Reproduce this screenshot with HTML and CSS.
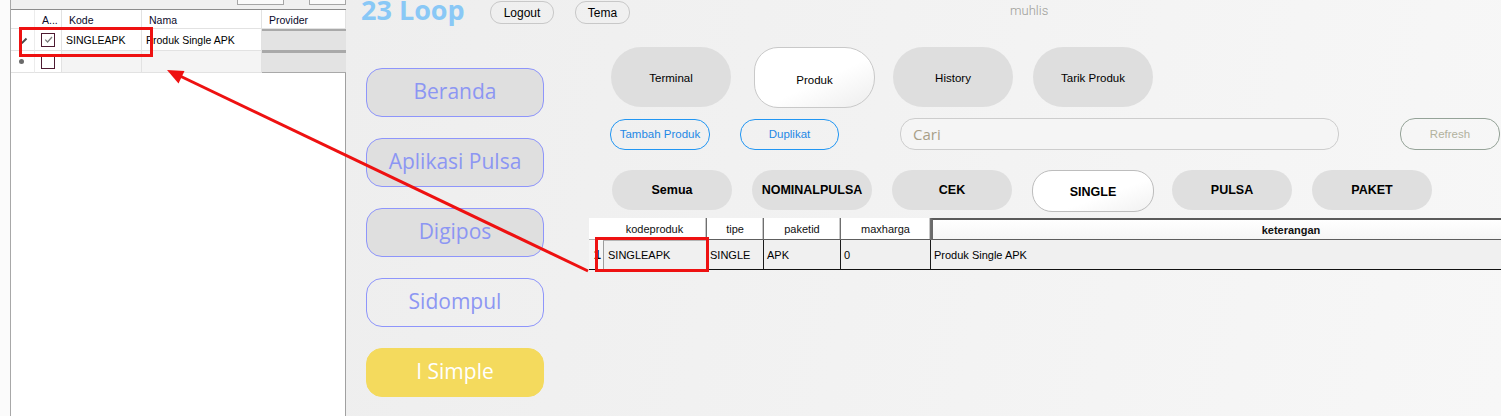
FILE: index.html
```html
<!DOCTYPE html>
<html>
<head>
<meta charset="utf-8">
<title>23 Loop</title>
<link rel="stylesheet" href="styles.css">
</head>
<body>
<div class="left">
  <div class="lmargin"></div>
  <div class="lmain">
    <div class="lstrip">
      <div class="tbtn tb1"></div>
      <div class="tbtn tb2"></div>
    </div>
    <div class="lgrid">
      <div class="c hd rh"></div>
      <div class="c hd ctr">A...</div>
      <div class="c hd">Kode</div>
      <div class="c hd">Nama</div>
      <div class="c hd">Provider</div>

      <div class="c rh"><svg class="pencil" width="8" height="8" viewBox="0 0 8 8"><path d="M0.5 7.5 L1.2 5.4 L5.8 0.8 L7.2 2.2 L2.6 6.8 Z" fill="#4a4a4a"/></svg></div>
      <div class="c ck"><span class="box"><svg width="11" height="11" viewBox="0 0 11 11"><polyline points="2.2,5.6 4.6,8 9,3" fill="none" stroke="#7a7a7a" stroke-width="1.2"/></svg></span></div>
      <div class="c txt">SINGLEAPK</div>
      <div class="c txt">Produk Single APK</div>
      <div class="c prov"></div>

      <div class="c rh"><span class="dot"></span></div>
      <div class="c ck"><span class="box"></span></div>
      <div class="c newrow"></div>
      <div class="c newrow"></div>
      <div class="c prov"></div>
    </div>
  </div>
</div>

<div class="right">
  <div class="head">
    <div class="brand">23 Loop</div>
    <div class="hbtn logout">Logout</div>
    <div class="hbtn tema">Tema</div>
    <div class="user">muhlis</div>
  </div>
  <div class="body">
    <nav class="side">
      <div class="nav">Beranda</div>
      <div class="nav">Aplikasi Pulsa</div>
      <div class="nav">Digipos</div>
      <div class="nav nav-out">Sidompul</div>
      <div class="nav nav-yellow">I Simple</div>
    </nav>
    <main class="main">
      <div class="tabs">
        <div class="tab">Terminal</div>
        <div class="tab tab-active">Produk</div>
        <div class="tab">History</div>
        <div class="tab">Tarik Produk</div>
      </div>
      <div class="actions">
        <div class="obtn tambah">Tambah Produk</div>
        <div class="obtn duplikat">Duplikat</div>
        <div class="search">Cari</div>
        <div class="refresh">Refresh</div>
      </div>
      <div class="filters">
        <div class="fbtn">Semua</div>
        <div class="fbtn">NOMINALPULSA</div>
        <div class="fbtn">CEK</div>
        <div class="fbtn fbtn-active">SINGLE</div>
        <div class="fbtn">PULSA</div>
        <div class="fbtn">PAKET</div>
      </div>
      <div class="dgrid">
        <div class="th ind"></div>
        <div class="th">kodeproduk</div>
        <div class="th">tipe</div>
        <div class="th">paketid</div>
        <div class="th">maxharga</div>
        <div class="th ket">keterangan</div>

        <div class="td ind">1</div>
        <div class="td kode">SINGLEAPK</div>
        <div class="td">SINGLE</div>
        <div class="td">APK</div>
        <div class="td">0</div>
        <div class="td">Produk Single APK</div>
      </div>
    </main>
  </div>
</div>

<svg class="annot" width="1501" height="416" viewBox="0 0 1501 416">
  <rect x="20.5" y="28.5" width="131" height="27" fill="none" stroke="#ee1111" stroke-width="3"/>
  <rect x="596.5" y="238.5" width="111" height="32" fill="none" stroke="#ee1111" stroke-width="3"/>
  <line x1="588" y1="271" x2="180" y2="76" stroke="#ee1111" stroke-width="3"/>
  <polygon points="167,70 184.5,71 178.5,83.5" fill="#ee1111"/>
</svg>
</body>
</html>
```

FILE: styles.css
```css
* { box-sizing: border-box; }

body {
  margin: 0;
  width: 1501px;
  height: 416px;
  overflow: hidden;
  position: relative;
  display: flex;
  font-family: "Liberation Sans", Arial, sans-serif;
  background: #ffffff;
}

/* ---------- left window ---------- */
.left {
  width: 346px;
  height: 416px;
  display: flex;
  flex-shrink: 0;
}
.lmargin {
  width: 11px;
  background: #fbfbfb;
  border-right: 1px solid #a8a8a8;
}
.lmain {
  width: 335px;
  display: flex;
  flex-direction: column;
}
.lstrip {
  height: 10px;
  background: #f0f0f0;
  display: flex;
  padding-left: 226px;
  gap: 25px;
  border-bottom: 1px solid #8c8c8c;
}
.tbtn {
  height: 5px;
  border: 1px solid #a6a6a6;
  border-top: none;
  background: #fafafa;
}
.tb1 { width: 52px; }
.tb2 { width: 40px; }

.lgrid {
  flex: 1;
  display: grid;
  grid-template-columns: 24px 27px 80px 120px 84px;
  grid-template-rows: 19px 22px 22px;
  align-content: start;
  background: #ffffff;
  border-right: 1px solid #a0a0a0;
}
.c {
  border-right: 1px solid #e2e2e2;
  border-bottom: 1px solid #e2e2e2;
  font-size: 10.5px;
  color: #0a0a2a;
  display: flex;
  align-items: center;
}
.hd { padding-left: 7px; padding-top: 1px; }
.hd.ctr { padding-left: 7px; }
.rh { justify-content: center; border-right-color: #ececec; }
.pencil { margin-left: 2px; margin-top: 2px; }
.dot {
  width: 5px;
  height: 5px;
  border-radius: 50%;
  background: #6a6a6a;
  margin-left: -2px;
}
.ck { padding-left: 6px; }
.box {
  width: 14px;
  height: 14px;
  border: 1px solid #4d1a32;
  background: #ffffff;
  display: flex;
  align-items: center;
  justify-content: center;
}
.txt { padding-left: 4px; color: #000; }
.newrow { background: #f4f4f4; }
.prov {
  background: #e3e3e3;
  border-top: 2px solid #a9a9a9;
  border-bottom: 1px solid #a9a9a9;
  border-right: none;
}

/* ---------- right app ---------- */
.right {
  flex: 1;
  min-width: 0;
  height: 416px;
  overflow: hidden;
  background: linear-gradient(100deg, #eeeeee 0%, #f2f2f2 45%, #f7f7f7 100%);
}
.head {
  height: 26px;
  display: flex;
  align-items: flex-start;
  padding-left: 15px;
}
.brand {
  width: 100px;
  font-family: "Open Sans", sans-serif;
  font-weight: 700;
  font-size: 27px;
  line-height: 20px;
  height: 24px;
  padding-top: 0;
  color: #89c8f6;
  white-space: nowrap;
}
.hbtn {
  margin-top: 1px;
  height: 23px;
  border: 1px solid #c8c8c8;
  border-radius: 11px;
  font-size: 12px;
  color: #000;
  display: flex;
  align-items: center;
  justify-content: center;
}
.logout { width: 64px; margin-left: 29px; }
.tema { width: 55px; margin-left: 21px; }
.user {
  margin-left: 380px;
  margin-top: 3px;
  font-family: Roboto, sans-serif;
  font-weight: 300;
  font-size: 13px;
  color: #9c9c96;
}

.body {
  display: flex;
}
.side {
  width: 178px;
  margin-left: 20px;
  margin-top: 42px;
  display: flex;
  flex-direction: column;
  gap: 21px;
  flex-shrink: 0;
}
.nav {
  height: 49px;
  border: 1px solid #8e95fb;
  border-radius: 16px;
  background: #dfdfdf;
  color: #8c96f3;
  font-family: "Open Sans", sans-serif;
  font-size: 21px;
  display: flex;
  align-items: center;
  justify-content: center;
  padding-bottom: 3px;
}
.nav-out { background: transparent; }
.nav-yellow {
  background: #f4da5d;
  border-color: #f4da5d;
  color: #ffffff;
}

.main {
  margin-left: 45px;
  margin-top: 21px;
  flex: 1;
  min-width: 0;
}
.tabs {
  display: flex;
  gap: 20px;
  padding-left: 22px;
  height: 61px;
}
.tab {
  width: 120px;
  height: 60px;
  border-radius: 30px;
  background: #dedede;
  font-size: 11.5px;
  color: #000;
  display: flex;
  align-items: center;
  justify-content: center;
  padding-top: 1px;
}
.tab-active {
  width: 121px;
  height: 61px;
  margin-left: 3px;
  margin-right: -2px;
  border: 1px solid #c9c9c9;
  border-radius: 24px 30px 30px 24px;
  background: linear-gradient(155deg, #ffffff 55%, #ededed 100%);
  padding-top: 4px;
}

.actions {
  margin-top: 10px;
  padding-left: 21px;
  display: flex;
  align-items: center;
  height: 32px;
}
.obtn {
  height: 31px;
  border: 1px solid #2196f3;
  border-radius: 15px;
  color: #1e88e5;
  font-size: 11.5px;
  display: flex;
  align-items: center;
  justify-content: center;
}
.tambah { width: 100px; }
.duplikat { width: 99px; margin-left: 30px; }
.search {
  width: 439px;
  height: 32px;
  margin-left: 61px;
  border: 1px solid #cdcdcd;
  border-radius: 15px;
  background: #f5f5f5;
  font-family: "Open Sans", sans-serif;
  font-size: 15px;
  color: #a89f88;
  display: flex;
  align-items: center;
  padding-left: 12px;
}
.refresh {
  width: 100px;
  height: 32px;
  margin-left: 61px;
  border: 1px solid #95a398;
  border-radius: 15px;
  color: #b2b29e;
  font-size: 11.5px;
  display: flex;
  align-items: center;
  justify-content: center;
}

.filters {
  margin-top: 20px;
  padding-left: 23px;
  display: flex;
  gap: 20px;
  height: 40px;
}
.fbtn {
  width: 120px;
  height: 40px;
  border-radius: 20px;
  background: #dfdfdf;
  font-weight: 700;
  font-size: 12.5px;
  color: #000;
  display: flex;
  align-items: center;
  justify-content: center;
}
.fbtn-active {
  width: 122px;
  height: 42px;
  margin-right: -2px;
  border: 1px solid #bdbdbd;
  background: linear-gradient(160deg, #ffffff 60%, #f1f1f1 100%);
  padding-top: 2px;
}

.dgrid {
  margin-top: 8px;
  display: grid;
  grid-template-columns: 14px 104px 57px 77px 90px 718px;
  grid-template-rows: 22px 30px;
  width: 1060px;
  font-size: 11px;
}
.th {
  background: #ffffff;
  border-right: 1px solid #6f6f6f;
  border-bottom: 1px solid #5e5e5e;
  box-shadow: inset -1px 0 0 #c8c8c8;
  display: flex;
  align-items: center;
  justify-content: center;
  color: #111;
  padding-top: 1px;
}
.th.ind { border-right: none; box-shadow: none; border-bottom-color: #b0b0b0; }
.th.ket {
  border-top: 2px solid #5a5a5a;
  border-left: 2px solid #6a6a6a;
  border-right: none;
  box-shadow: none;
  font-weight: 700;
  background: linear-gradient(180deg, #ffffff 0%, #f6f6f6 100%);
}
.td {
  background: #f0f0f0;
  border-right: 1px solid #1a1a1a;
  border-bottom: 1px solid #111;
  display: flex;
  align-items: center;
  padding-left: 3px;
  color: #000;
}
.td.ind {
  background: #f6f6f6;
  border-right: none;
  font-weight: 700;
  font-size: 13px;
  color: #000;
  justify-content: flex-end;
  padding-right: 2px;
}
.td.kode {
  border-left: 1px solid #9c9c9c;
  border-top: 1px solid #b4b4b4;
  padding-left: 4px;
  border-right-color: #1a1a1a;
}

.annot {
  position: absolute;
  left: 0;
  top: 0;
  pointer-events: none;
}
```
